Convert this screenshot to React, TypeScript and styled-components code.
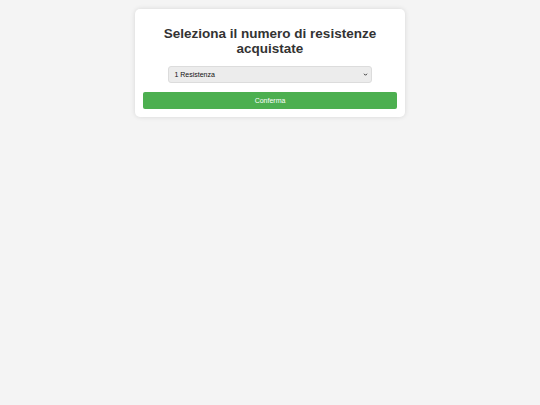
import React from 'react';
import styled, { createGlobalStyle } from 'styled-components';

const GlobalStyle = createGlobalStyle`
  html, body {
    margin: 0;
    padding: 0;
    background-color: #f4f4f4;
    font-family: "Liberation Sans", Arial, sans-serif;
  }
`;

const Page = styled.div`
  display: flex;
  justify-content: center;
  align-items: flex-start;
  padding-top: 9px;
  min-height: 405px;
  box-sizing: border-box;
`;

const Card = styled.div`
  width: 270px;
  box-sizing: border-box;
  background-color: #ffffff;
  border-radius: 5px;
  box-shadow: 0 0 5px rgba(0, 0, 0, 0.12);
  padding: 17px 8px 8px;
  display: flex;
  flex-direction: column;
  align-items: center;
`;

const Title = styled.h1`
  margin: 0 0 10px;
  font-size: 13.5px;
  line-height: 15px;
  font-weight: 700;
  color: #333333;
  text-align: center;
`;

const SelectWrap = styled.div`
  position: relative;
  width: 80%;
  height: 17px;
  margin-bottom: 9px;
`;

const Select = styled.select`
  display: block;
  appearance: none;
  width: 100%;
  height: 17px;
  box-sizing: border-box;
  padding: 0 14px 0 5px;
  font-family: "Liberation Sans", Arial, sans-serif;
  font-size: 7px;
  color: #111111;
  background-color: #ececec;
  border: 1px solid #dcdcdc;
  border-radius: 3px;
  outline: none;
`;

const Chevron = styled.svg`
  position: absolute;
  right: 4px;
  top: 6px;
  width: 5px;
  height: 5px;
  pointer-events: none;
`;

const Button = styled.button`
  display: block;
  width: 100%;
  height: 17px;
  border: none;
  border-radius: 2px;
  background-color: #4caf50;
  color: #ffffff;
  font-family: "Liberation Sans", Arial, sans-serif;
  font-size: 7px;
  cursor: pointer;
`;

const App: React.FC = () => {
  return (
    <>
      <GlobalStyle />
      <Page>
        <Card>
          <Title>
            Seleziona il numero di resistenze
            <br />
            acquistate
          </Title>
          <SelectWrap>
            <Select defaultValue="1">
              <option value="1">1 Resistenza</option>
              <option value="2">2 Resistenze</option>
              <option value="3">3 Resistenze</option>
            </Select>
            <Chevron viewBox="0 0 10 10">
              <path d="M2 3.5 L5 6.5 L8 3.5" fill="none" stroke="#333" strokeWidth="2" />
            </Chevron>
          </SelectWrap>
          <Button>Conferma</Button>
        </Card>
      </Page>
    </>
  );
};

export default App;
